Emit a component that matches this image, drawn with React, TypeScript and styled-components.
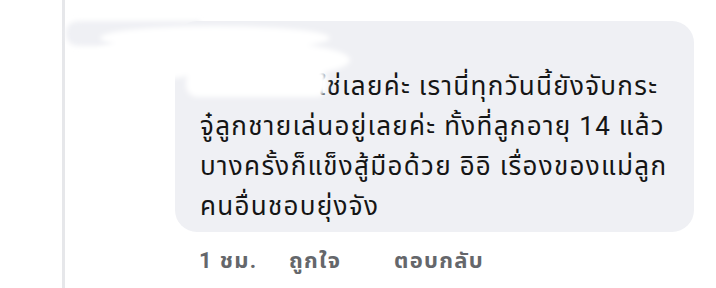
import React from "react";
import styled, { createGlobalStyle } from "styled-components";

const Global = createGlobalStyle`
  html, body { margin: 0; padding: 0; background: #ffffff; }
  body { font-family: Roboto, "Noto Sans Thai", "Noto Sans", sans-serif; }
`;

const Page = styled.div`
  position: relative;
  width: 716px;
  height: 288px;
  display: flex;
  overflow: hidden;
  background: #ffffff;
`;

const Gutter = styled.div`
  width: 62px;
  flex: none;
  display: flex;
  justify-content: flex-end;
`;

const ThreadLine = styled.div`
  width: 3px;
  height: 100%;
  background: #e6e7ea;
  margin-right: -3px;
`;

const CommentColumn = styled.div`
  margin-left: 113px;
  padding-top: 21px;
  display: flex;
  flex-direction: column;
`;

const Bubble = styled.div`
  width: 519px;
  box-sizing: border-box;
  background: #eff0f4;
  border-radius: 22px;
  padding: 12px 10px 6px 25px;
`;

const NameRow = styled.div`
  height: 33px;
`;

const Body = styled.div`
  font-size: 26px;
  line-height: 40px;
  letter-spacing: 1.3px;
  color: #151515;
  white-space: nowrap;
`;

const NameTag = styled.span`
  display: inline-block;
  width: 118px;
`;

const MetaRow = styled.div`
  display: flex;
  margin-top: 14px;
  padding-left: 24px;
  font-size: 22px;
  line-height: 30px;
  font-weight: 700;
  letter-spacing: 1.3px;
  color: #65676b;
`;

const MetaItem = styled.span<{ $w?: number }>`
  width: ${(p) => (p.$w ? `${p.$w}px` : "auto")};
  flex: none;
`;

const Smear = styled.svg`
  position: absolute;
  left: 0;
  top: 0;
  pointer-events: none;
`;

export default function App() {
  return (
    <Page>
      <Global />
      <Gutter>
        <ThreadLine />
      </Gutter>
      <CommentColumn>
        <Bubble>
          <NameRow />
          <Body>
            <NameTag />
            ใช่เลยค่ะ เรานี่ทุกวันนี้ยังจับกระ
            <br />
            จู๋ลูกชายเล่นอยู่เลยค่ะ ทั้งที่ลูกอายุ 14 แล้ว
            <br />
            บางครั้งก็แข็งสู้มือด้วย อิอิ เรื่องของแม่ลูก
            <br />
            คนอื่นชอบยุ่งจัง
          </Body>
        </Bubble>
        <MetaRow>
          <MetaItem $w={90}>1 ชม.</MetaItem>
          <MetaItem $w={105}>ถูกใจ</MetaItem>
          <MetaItem>ตอบกลับ</MetaItem>
        </MetaRow>
      </CommentColumn>
      <Smear width="716" height="288" viewBox="0 0 716 288">
        <defs>
          <filter id="soft" x="-20%" y="-50%" width="140%" height="200%">
            <feGaussianBlur stdDeviation="2.5" />
          </filter>
        </defs>
        <path d="M80 21 H200 V46 H80 Q66 46 66 33 Q66 21 80 21 Z" fill="#eff0f4" filter="url(#soft)" />
        <g fill="#ffffff" filter="url(#soft)">
          <ellipse cx="215" cy="38" rx="115" ry="12" />
          <ellipse cx="250" cy="60" rx="100" ry="18" />
          <rect x="186" y="70" width="142" height="27" rx="12" />
          <ellipse cx="150" cy="60" rx="60" ry="20" />
        </g>
      </Smear>
    </Page>
  );
}
